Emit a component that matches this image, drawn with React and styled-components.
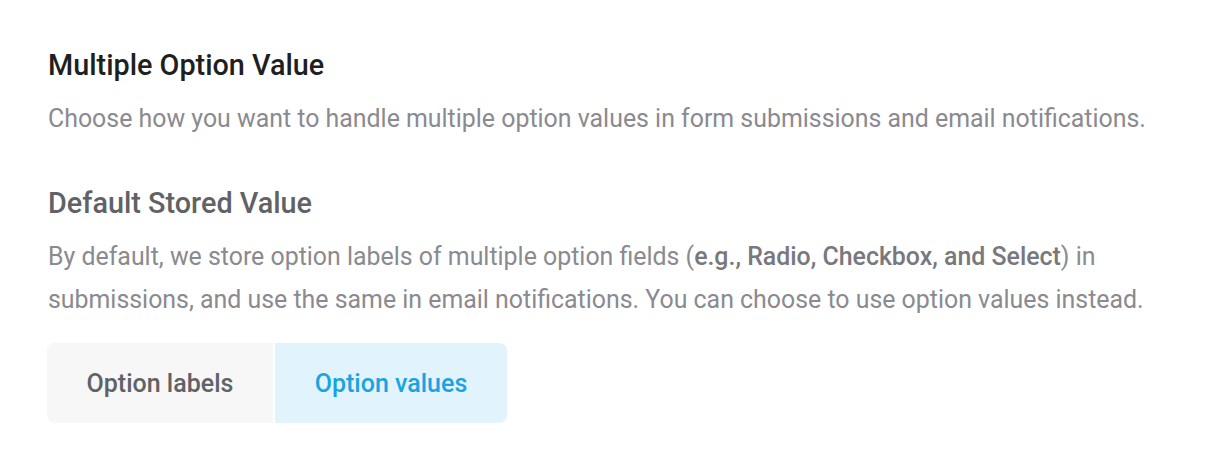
import React, { useState } from "react";
import styled, { createGlobalStyle } from "styled-components";

const GlobalStyle = createGlobalStyle`
  body {
    margin: 0;
    background: #ffffff;
    font-family: Roboto, "Liberation Sans", sans-serif;
  }
`;

const Section = styled.section`
  padding: 47px 48px 40px;
`;

const Title = styled.h2`
  margin: 0 0 14px;
  font-size: 28.8px;
  font-weight: 500;
  line-height: 36px;
  color: ${(p) => (p.$muted ? "#606266" : "#1e1f21")};
`;

const Text = styled.p`
  margin: 0 0 ${(p) => p.$gap}px;
  font-size: 24.9px;
  line-height: 43px;
  color: #8a8a8f;

  strong {
    font-weight: 500;
    color: #78787d;
  }
`;

const Toggle = styled.div`
  display: inline-flex;
  gap: 2px;
  margin-left: -1px;
  border-radius: 8px;
  overflow: hidden;
`;

const ToggleButton = styled.button`
  height: 80px;
  width: ${(p) => p.$width}px;
  border: 0;
  padding: 0;
  font-family: inherit;
  font-size: 25px;
  font-weight: 500;
  cursor: pointer;
  background: ${(p) => (p.$active ? "#e1f4fd" : "#f7f7f7")};
  color: ${(p) => (p.$active ? "#1ba3e1" : "#606266")};
`;

export default function App() {
  const [value, setValue] = useState("values");
  return (
    <>
      <GlobalStyle />
      <Section>
        <Title>Multiple Option Value</Title>
        <Text $gap={45}>
          Choose how you want to handle multiple option values in form submissions and email notifications.
        </Text>
        <Title $muted>Default Stored Value</Title>
        <Text $gap={22}>
          By default, we store option labels of multiple option fields (
          <strong>e.g., Radio, Checkbox, and Select</strong>) in submissions, and use the same in email
          notifications. You can choose to use option values instead.
        </Text>
        <Toggle>
          <ToggleButton $width={226} $active={value === "labels"} onClick={() => setValue("labels")}>
            Option labels
          </ToggleButton>
          <ToggleButton $width={232} $active={value === "values"} onClick={() => setValue("values")}>
            Option values
          </ToggleButton>
        </Toggle>
      </Section>
    </>
  );
}
